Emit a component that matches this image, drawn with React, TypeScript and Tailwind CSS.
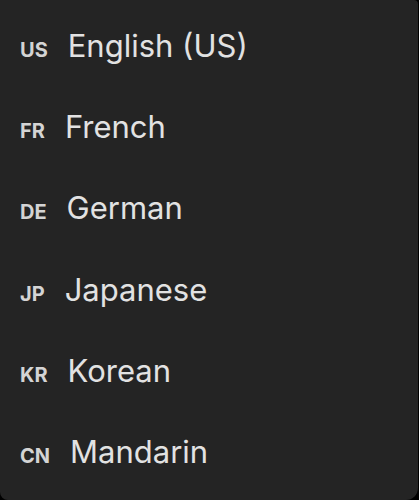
const languages = [
  { code: 'US', name: 'English (US)' },
  { code: 'FR', name: 'French' },
  { code: 'DE', name: 'German' },
  { code: 'JP', name: 'Japanese' },
  { code: 'KR', name: 'Korean' },
  { code: 'CN', name: 'Mandarin' },
]

export default function App() {
  return (
    <div className="w-[419px] h-[500px] bg-black overflow-hidden">
      <div
        className="w-[418px] h-[500px] bg-[#242424] rounded-tr-[4px] rounded-br-[12px] rounded-bl-[8px] pt-[27px] pl-[20px] flex flex-col"
        style={{ fontFamily: 'Inter, "Noto Sans", sans-serif' }}
      >
        {languages.map((lang) => (
          <div key={lang.code} className="h-[81.2px] shrink-0 flex items-baseline gap-[20px] leading-[38px]">
            <span className="text-[20px] font-bold text-[#d4d4d4]">{lang.code}</span>
            <span className="text-[31px] text-[#e2e2e2]">{lang.name}</span>
          </div>
        ))}
      </div>
    </div>
  )
}
